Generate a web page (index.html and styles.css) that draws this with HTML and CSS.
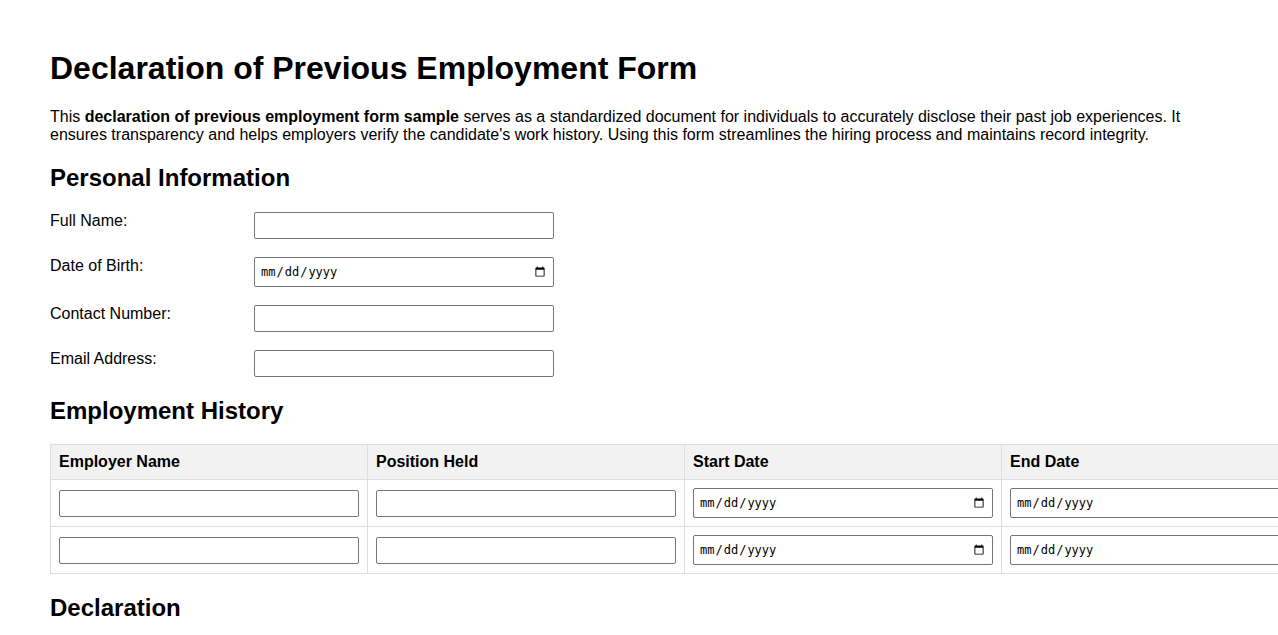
FILE: index.html
```html
<!DOCTYPE html>
<html lang="en">
<head>
    <meta charset="UTF-8">
    <meta name="viewport" content="width=device-width, initial-scale=1.0">
    <title>Declaration of Previous Employment Form</title>
    <link rel="stylesheet" href="styles.css">
</head>
<body>
    <div class="page">
        <h1>Declaration of Previous Employment Form</h1>
        <p class="intro">This <strong>declaration of previous employment form sample</strong> serves as a standardized document for individuals to accurately disclose their past job experiences. It ensures transparency and helps employers verify the candidate's work history. Using this form streamlines the hiring process and maintains record integrity.</p>

        <h2>Personal Information</h2>
        <div class="form-group">
            <label for="full-name">Full Name:</label>
            <input type="text" id="full-name">
        </div>
        <div class="form-group">
            <label for="dob">Date of Birth:</label>
            <input type="date" id="dob">
        </div>
        <div class="form-group">
            <label for="contact">Contact Number:</label>
            <input type="text" id="contact">
        </div>
        <div class="form-group">
            <label for="email">Email Address:</label>
            <input type="text" id="email">
        </div>

        <h2 class="history-title">Employment History</h2>
        <table class="history">
            <tr>
                <th>Employer Name</th>
                <th>Position Held</th>
                <th>Start Date</th>
                <th>End Date</th>
            </tr>
            <tr>
                <td><input type="text"></td>
                <td><input type="text"></td>
                <td><input type="date"></td>
                <td><input type="date"></td>
            </tr>
            <tr>
                <td><input type="text"></td>
                <td><input type="text"></td>
                <td><input type="date"></td>
                <td><input type="date"></td>
            </tr>
        </table>

        <h2>Declaration</h2>
    </div>
</body>
</html>
```

FILE: styles.css
```css
body {
    font-family: "Liberation Sans", Arial, sans-serif;
    margin: 0;
    color: #000;
    background-color: #fff;
}

.page {
    padding: 29px 50px 20px 50px;
}

h1 {
    font-size: 32px;
    margin: 21px 0;
}

.intro {
    font-size: 16px;
    margin: 0 0 16px;
}

h2 {
    font-size: 24px;
    margin: 20px 0;
}

.history-title {
    margin-bottom: 19px;
}

.form-group {
    display: flex;
    align-items: flex-start;
    margin-bottom: 18px;
}

.form-group label {
    width: 204px;
    font-size: 16px;
}

input {
    width: 300px;
    box-sizing: border-box;
    padding: 5px;
    border: 1px solid #767676;
    border-radius: 2px;
}

input[type="date"] {
    height: 30px;
    font-size: 12px;
}

.history {
    border-collapse: collapse;
    margin-bottom: 19px;
}

.history th,
.history td {
    border: 1px solid #ddd;
    padding: 8px;
    text-align: left;
}

.history th {
    background-color: #f2f2f2;
    font-size: 16px;
}
```
